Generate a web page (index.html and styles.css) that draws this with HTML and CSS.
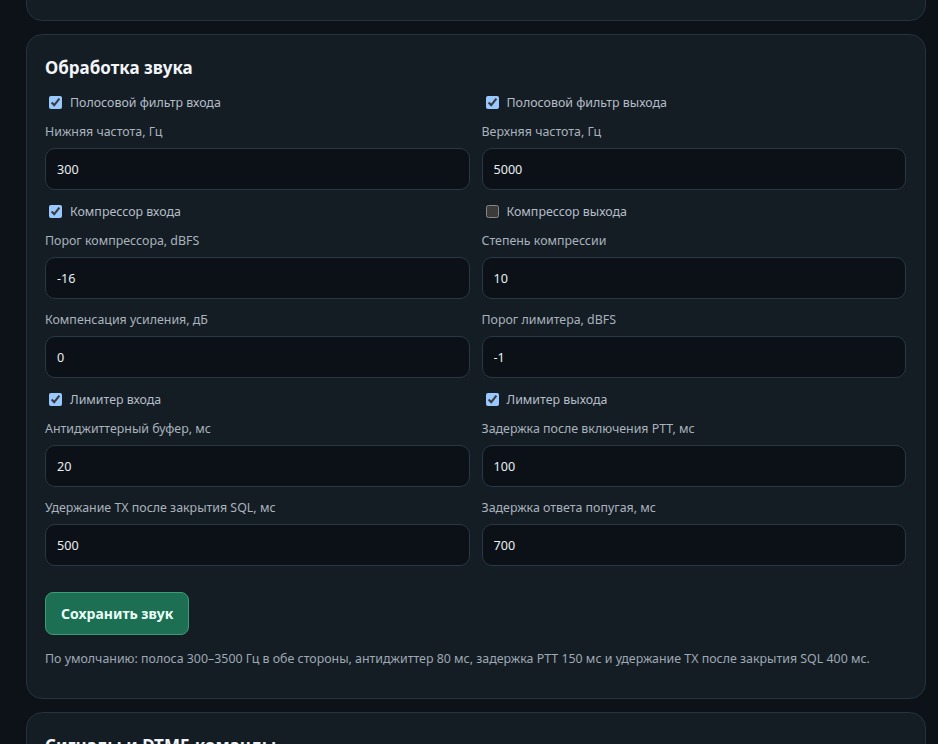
FILE: index.html
```html
<!DOCTYPE html>
<html lang="ru">
<head>
<meta charset="utf-8">
<title>Обработка звука</title>
<link rel="stylesheet" href="styles.css">
</head>
<body>
<div class="page">
  <section class="card card-prev"></section>

  <section class="card">
    <h2 class="card-title">Обработка звука</h2>
    <div class="grid">
      <label class="check"><input type="checkbox" checked><span>Полосовой фильтр входа</span></label>
      <label class="check"><input type="checkbox" checked><span>Полосовой фильтр выхода</span></label>

      <div class="field"><div class="field-label">Нижняя частота, Гц</div><input class="input" type="text" value="300"></div>
      <div class="field"><div class="field-label">Верхняя частота, Гц</div><input class="input" type="text" value="5000"></div>

      <label class="check"><input type="checkbox" checked><span>Компрессор входа</span></label>
      <label class="check"><input type="checkbox"><span>Компрессор выхода</span></label>

      <div class="field"><div class="field-label">Порог компрессора, dBFS</div><input class="input" type="text" value="-16"></div>
      <div class="field"><div class="field-label">Степень компрессии</div><input class="input" type="text" value="10"></div>

      <div class="field"><div class="field-label">Компенсация усиления, дБ</div><input class="input" type="text" value="0"></div>
      <div class="field"><div class="field-label">Порог лимитера, dBFS</div><input class="input" type="text" value="-1"></div>

      <label class="check"><input type="checkbox" checked><span>Лимитер входа</span></label>
      <label class="check"><input type="checkbox" checked><span>Лимитер выхода</span></label>

      <div class="field"><div class="field-label">Антиджиттерный буфер, мс</div><input class="input" type="text" value="20"></div>
      <div class="field"><div class="field-label">Задержка после включения PTT, мс</div><input class="input" type="text" value="100"></div>

      <div class="field"><div class="field-label">Удержание TX после закрытия SQL, мс</div><input class="input" type="text" value="500"></div>
      <div class="field"><div class="field-label">Задержка ответа попугая, мс</div><input class="input" type="text" value="700"></div>
    </div>
    <button class="btn" type="button">Сохранить звук</button>
    <p class="note">По умолчанию: полоса 300–3500 Гц в обе стороны, антиджиттер 80 мс, задержка PTT 150 мс и удержание TX после закрытия SQL 400 мс.</p>
  </section>

  <section class="card">
    <h2 class="card-title">Сигналы и DTMF-команды</h2>
  </section>
</div>
</body>
</html>
```
FILE: styles.css
```css
html, body {
  margin: 0;
  padding: 0;
  background: #0c1217;
  height: 100%;
  overflow: hidden;
}
body {
  font-family: "Noto Sans", "Open Sans", "Liberation Sans", sans-serif;
  font-size: 12.4px;
  color: #aeb8c1;
}
.page {
  width: 900px;
  margin-left: 26px;
  display: flex;
  flex-direction: column;
  gap: 13px;
}
.card {
  background: #141c24;
  border: 1px solid #24333e;
  border-radius: 16px;
  padding: 21px 19px 30px 18px;
  flex-shrink: 0;
}
.card-prev {
  height: 80px;
  margin-top: -61px;
  padding: 0;
}
.card-title {
  margin: 0 0 13px;
  font-size: 17px;
  line-height: 24px;
  font-weight: 700;
  color: #f1f5f8;
}
.grid {
  display: grid;
  grid-template-columns: 1fr 1fr;
  column-gap: 12px;
  row-gap: 12px;
}
.check {
  display: flex;
  align-items: center;
  height: 18px;
  gap: 8px;
  color: #b4bec7;
}
.check input {
  color-scheme: dark;
  width: 13px;
  height: 13px;
  margin: 0 0 0 4px;
}
.field {
  display: flex;
  flex-direction: column;
}
.field-label {
  line-height: 18px;
  margin-bottom: 7px;
  color: #a9b3bc;
}
.input {
  box-sizing: border-box;
  height: 42px;
  width: 100%;
  background: #0b1117;
  border: 1px solid #283844;
  border-radius: 10px;
  padding: 0 11px;
  font-family: inherit;
  font-size: 12.6px;
  color: #e9eef2;
  outline: none;
}
.btn {
  display: block;
  margin-top: 26px;
  height: 43px;
  padding: 0 15px;
  background: #1d6f54;
  border: 1px solid #3a9d78;
  border-radius: 8px;
  color: #eafff5;
  font-family: inherit;
  font-size: 14px;
  font-weight: 700;
}
.note {
  margin: 15px 0 0;
  line-height: 18px;
  color: #9ea9b3;
}
```
